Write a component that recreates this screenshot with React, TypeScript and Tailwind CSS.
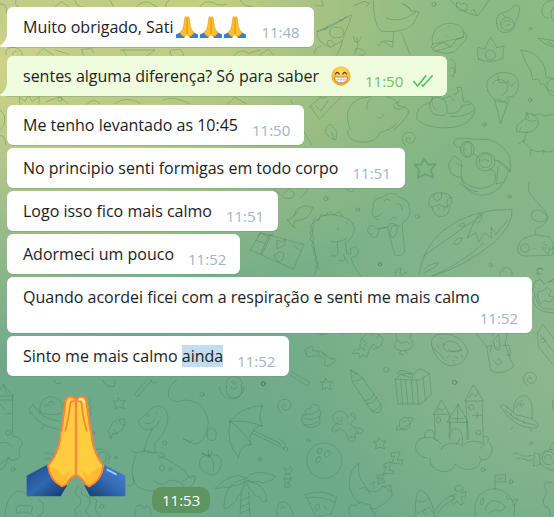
import type { ReactNode } from 'react';

type Message = {
  text: string;
  time: string;
  selected?: string;
  emoji?: 'hands' | 'grin';
  sent?: boolean;
  tail?: boolean;
};

const messages: Message[] = [
  { text: 'Muito obrigado, Sati', time: '11:48', emoji: 'hands', tail: true },
  { text: 'sentes alguma diferença? Só para saber', time: '11:50', emoji: 'grin', sent: true, tail: true },
  { text: 'Me tenho levantado as 10:45', time: '11:50' },
  { text: 'No principio senti formigas em todo corpo', time: '11:51' },
  { text: 'Logo isso fico mais calmo', time: '11:51' },
  { text: 'Adormeci um pouco', time: '11:52' },
  { text: 'Quando acordei ficei com a respiração e senti me mais calmo', time: '11:52' },
  { text: 'Sinto me mais calmo ', selected: 'ainda', time: '11:52' },
];

const FoldedHands = ({ className }: { className: string }) => (
  <svg viewBox="0 0 300 306" className={className} role="img" aria-label="Folded hands">
    <defs>
      <linearGradient id="sleeveLeft" x1="0" y1="0" x2="1" y2="1">
        <stop offset="0" stopColor="#1d4580" />
        <stop offset="0.5" stopColor="#3168b0" />
        <stop offset="1" stopColor="#123566" />
      </linearGradient>
      <linearGradient id="sleeveRight" x1="0" y1="1" x2="1" y2="0">
        <stop offset="0" stopColor="#143a70" />
        <stop offset="0.5" stopColor="#3269b2" />
        <stop offset="1" stopColor="#4a86d8" />
      </linearGradient>
    </defs>
    <path d="M2 242 66 208 Q80 250 124 270 L104 304 H2Z" fill="url(#sleeveLeft)" />
    <path d="M298 242 232 208 Q218 250 174 270 L192 304 H298Z" fill="url(#sleeveRight)" />
    <path
      d="M150 14 Q140 2 128 6 Q119 10 118 24 L107 105 Q102 112 103 130 L98 153 Q88 187 66 212 Q72 256 108 274 L124 266 Q128 250 150 240Z"
      fill="#ffcd3e" stroke="#f9853a" strokeWidth="6" strokeLinejoin="round"
    />
    <path
      d="M150 14 Q160 2 172 6 Q181 10 182 24 L193 105 Q198 112 197 130 L202 153 Q212 187 232 212 Q226 256 190 274 L176 266 Q172 250 150 240Z"
      fill="#ffcd3e" stroke="#f9853a" strokeWidth="6" strokeLinejoin="round"
    />
    <path d="M74 215 Q96 224 110 240 Q125 236 140 218 Q124 242 119 266 L108 272 Q78 258 74 215Z" fill="#ffb52f" opacity=".7" />
    <path d="M226 215 Q204 224 190 240 Q175 236 160 218 Q176 242 181 266 L190 272 Q222 258 226 215Z" fill="#ffb52f" opacity=".7" />
    <g fill="none" stroke="#f9853a" strokeLinecap="round" strokeWidth="5">
      <path d="M133 26 128 62 118 108M167 26 171 62 182 108M133 26Q134 17 145 18M167 26Q166 17 155 18" />
      <path d="M150 12V236" strokeWidth="7" />
    </g>
    <path d="M160 14Q171 9 174 22" fill="none" stroke="#fff1ba" strokeWidth="5" strokeLinecap="round" />
    <path d="M244 224 270 238" stroke="#a9d0ff" strokeWidth="5" strokeLinecap="round" />
  </svg>
);

const SmallHands = () => (
  <svg viewBox="0 0 24 24" className="size-6" role="img" aria-label="Folded hands">
    <path d="M1 19.500 6 17 10 21.500 9 23H1ZM23 19.500 18 17 14 21.500 15 23H23Z" fill="#3b7fc9" />
    <path
      d="M12 2.500C11 1 10 1.500 9.800 3L8.700 11Q8 15 5 17.500Q6.500 21 9.500 22L12 19.500L14.500 22Q17.500 21 19 17.500Q16 15 15.300 11L14.200 3C14 1.500 13 1 12 2.500Z"
      fill="#fdc12c" stroke="#eb9b25" strokeWidth=".6"
    />
    <path d="M12 3V19" stroke="#d98620" strokeWidth=".9" />
  </svg>
);

const Grin = () => (
  <svg viewBox="0 0 20 20" className="size-5" role="img" aria-label="Beaming face">
    <defs>
      <radialGradient id="face" cx=".5" cy=".3" r=".75">
        <stop offset="0" stopColor="#ffe065" />
        <stop offset="1" stopColor="#f5a029" />
      </radialGradient>
    </defs>
    <circle cx="10" cy="10" r="9.700" fill="url(#face)" />
    <path d="M4.500 8Q6.300 4.800 8.200 8M11.800 8Q13.700 4.800 15.500 8" fill="none" stroke="#5b3a12" strokeWidth="1.300" strokeLinecap="round" />
    <path d="M3.500 11H16.500Q16 17 10 17T3.500 11Z" fill="#fff" stroke="#96673a" strokeWidth=".7" />
    <path d="M4.500 13.700H15.500M7 11V16M10 11V17M13 11V16" stroke="#b9aca0" strokeWidth=".6" />
  </svg>
);

const ReadTicks = () => (
  <svg viewBox="0 0 22 14" className="h-3.5 w-5" fill="none" stroke="#5cc163" strokeWidth="2" role="img" aria-label="Read">
    <path d="M1 7.500 5 12.500 14 1.500M10 11.500 11 12.500 21 1.500" strokeLinecap="round" strokeLinejoin="round" />
  </svg>
);

// Line drawings of the chat wallpaper, at three units per pixel
const Doodles = ({ at, children }: { at: string; children: ReactNode }) => (
  <g transform={`translate(${at}) scale(.3333)`}>{children}</g>
);

const Star = ({ x, y, r = 1 }: { x: number; y: number; r?: number }) => (
  <path transform={`translate(${x} ${y}) scale(${r})`} d="M-3-17 5-6 18-7 10 4 14 17 0 11-13 17-11 3-19-6-7-6Z" />
);

const Swirl = ({ x, y }: { x: number; y: number }) => (
  <path transform={`translate(${x} ${y})`} d="M-8 20C-28 8-20-20 0-20 20-20 26 0 12 10 0 18-12 6-6-2-2-8 6-4 4 2" />
);

const Wallpaper = () => (
  <svg
    viewBox="0 0 554 517"
    preserveAspectRatio="xMinYMin slice"
    className="absolute inset-0 size-full"
    fill="none"
    stroke="#3c7a53"
    strokeOpacity=".35"
    strokeWidth="3"
    strokeLinecap="round"
    strokeLinejoin="round"
    aria-hidden="true"
  >
    <Doodles at="0 0">
      <path d="M0 12Q22 8 20 40M48 0Q42 18 58 20M165 20 185 5 208 22M225 0Q228 20 250 22M330 0 340 20M410 20Q420 5 445 6L470 20M510 0Q490 10 500 21M600 20Q610 0 640 8Q660 20 680 12M720 0Q730 20 760 20" />
      <path d="M18 165Q12 145 38 142Q62 142 68 165M38 165Q35 152 50 154M110 165 130 145 160 165M165 150 205 162M250 165 245 148 275 146 282 160M360 150H465L440 168M370 150 380 168M515 168Q500 144 525 150Q550 140 550 168M700 168Q720 142 745 160L780 150" />
      <path d="M60 315 58 292 75 304 86 285 96 304 118 290 116 315M140 305 180 290 205 312M260 314Q280 288 300 312M345 310Q380 285 420 310M490 300Q520 285 570 312M680 314 705 292 740 312" />
      <circle cx="180" cy="298" r="6" />
      <path d="M0 330Q15 340 14 360T0 390M0 405Q18 410 18 435" />
    </Doodles>
    <Doodles at="260 0">
      <path d="M185 0 190 18 167 17M282 17 312 4 328 10 316 21M340 0Q340 82 366 94Q432 100 460 72L478 36 455 32Q445 18 426 10M432 12Q448 22 455 35M378 54Q405 66 440 53L467 38M401 96 398 142 367 123 356 138M398 125 372 122M424 98 450 163" />
      <circle cx="522" cy="13" r="6" />
      <path d="M570 0Q608 40 652 48Q672 28 686 0M590 10C585 35 608 34 620 30 626 10 612 4 604 14 600 5 592 3 590 10ZM651 46 641 28M641 28 632 35" />
      <path d="M172 95 276 44 247 122 212 142Q165 125 172 95ZM174 94Q226 78 264 47M230 82A16 16 0 1 0 230 112A16 16 0 1 0 230 82M190 88Q202 92 203 80M212 142Q196 130 205 122Q216 118 222 134M237 58Q245 68 257 52M164 160Q160 144 184 138M247 122Q242 150 230 165" />
      <path d="M0 165 25 147 40 165M280 108 284 124Q298 132 304 110M291 112 294 137 283 164M285 148Q302 140 316 158Q312 170 296 164" />
      <path d="M518 132C508 88 548 62 585 72 616 80 612 104 610 112L518 132Q510 138 518 148Q552 168 584 155L616 122Q627 102 612 97M519 144Q550 120 560 133Q575 148 588 120L612 110M525 154 575 140" />
      <path d="M545 92h1M567 80h1M590 91h1M559 108h1M584 108h1M533 116h1" />
      <path d="M710 70Q706 42 732 38Q748 34 762 18Q780 10 779 31Q776 50 766 65Q766 94 738 98Q712 98 710 70ZM722 72A19 19 0 1 0 761 72A19 19 0 1 0 722 72M730 68Q738 56 753 65M728 44 736 53M735 77l15-4" />
      <circle cx="811" cy="86" r="4" />
      <path d="M882 0Q842 2 846 40Q848 52 866 54M882 20Q862 40 882 65M882 122 834 114Q850 132 882 142M882 136 864 126" />
      <path d="M656 178Q650 150 655 142L674 148Q685 120 691 112Q706 128 710 143L732 138 728 176Q690 192 656 178ZM676 165A15 15 0 1 0 706 165A15 15 0 1 0 676 165" />
      <path d="M784 150Q830 156 840 182L848 186Q857 205 858 232L882 236M784 150Q794 190 812 210L818 240 835 236 842 254 850 250Q862 275 882 275M882 288Q855 282 862 248Q870 234 882 236" />
      <path d="M572 178Q590 184 586 200L580 230 572 226M572 204Q590 198 586 219M683 272Q672 235 704 226Q712 214 752 220Q785 234 772 272Q766 292 741 292Q742 304 728 306 702 308 683 272M698 250A24 24 0 1 1 724 286M714 228Q710 250 728 248Q744 250 744 242 752 272 764 246M704 299 722 370 748 296M713 296 740 310" />
      <circle cx="810" cy="300" r="5" />
      <path d="M150 318 182 292M150 318 178 358 242 292M166 316 182 332 206 300M92 300 98 312M180 290Q190 300 200 290" />
      <path d="M270 390Q256 340 268 325Q285 292 325 292Q360 270 382 292Q410 294 416 318Q452 320 444 342Q428 370 400 390M322 330Q316 314 330 298M350 350Q362 362 372 344M402 312 420 304M400 320Q420 338 438 316" />
      <path d="M510 307Q460 322 472 360Q508 390 580 382Q632 376 646 330Q640 300 610 305L604 262 590 262 596 276 580 285M516 296Q500 320 520 342 548 350 552 346Q570 336 555 302Q538 286 516 296M518 290Q510 315 530 332M562 340Q600 344 606 316L630 314M570 350Q620 352 642 330M546 298 570 288 584 304" />
      <circle cx="673" cy="373" r="5" />
    </Doodles>
    <Doodles at="230 100">
      <path d="M220 92 246 135M286 90Q290 76 302 73Q326 98 320 105L317 120Q288 112 286 90ZM305 96 312 118" />
      <path d="M352 90Q352 122 388 126Q440 130 452 96 482 92 500 70" />
      <Swirl x={536} y={117} />
      <Star x={586} y={204} r={1.7} />
      <path d="M866 95Q855 104 862 75L886 56 890 38 912 46Q935 62 918 83 905 104 866 95M912 46Q928 36 944 48L972 42M890 38 896 54M904 38 912 47M887 76h2M868 90l6-7M866 131 888 120M892 96 880 126 904 148 900 166M904 148Q924 160 940 152L942 160M940 152Q960 162 972 150M888 56Q900 68 918 62" />
      <path d="M670 130Q676 110 700 115L742 118Q810 110 838 170L842 216 800 180M672 130Q678 144 692 143M692 148A20 24 0 1 0 732 148A20 24 0 1 0 692 148M702 148A12 15 0 1 0 724 148A12 15 0 1 0 702 148M738 185A28 27 0 1 0 795 185A28 27 0 1 0 738 185M748 182A19 17 0 1 0 785 182A19 17 0 1 0 748 182M730 160 745 172M794 180Q810 178 842 212M674 168Q650 185 658 208 665 230 692 232 708 284 755 286 800 284 824 244L836 210M696 198Q686 230 706 250 750 280 792 252 806 218 780 206M674 168 694 184 696 200 678 188M804 200 800 252 822 246M690 252Q720 275 745 275M755 182Q765 174 778 184" />
      <circle cx="838" cy="290" r="5" />
      <path d="M596 310Q598 275 632 278 668 280 666 308 650 332 630 314 612 318 606 322 596 322 596 310M606 322Q612 350 636 350 658 346 660 320M616 280Q602 296 622 302 640 298 634 278M664 292Q646 292 652 320M626 324v6M642 322v6" />
      <circle cx="288" cy="296" r="6" />
      <circle cx="384" cy="329" r="5" />
      <circle cx="562" cy="349" r="6" />
      <circle cx="450" cy="492" r="5" />
      <circle cx="782" cy="496" r="5" />
      <path d="M133 268 164 294Q188 302 194 280L176 264M160 280 175 268M212 292Q230 280 234 262M345 266 364 276 378 264" />
      <path d="M173 360 188 380 196 362Q240 362 248 322 214 310 198 334 192 352 173 360M188 380 198 384M205 336 190 350M227 325h1" />
      <path d="M442 358Q418 348 430 322 426 294 458 292 490 266 508 292 540 300 538 322 550 348 516 370L524 456Q512 472 494 464L472 382 446 388 442 408Q428 420 422 402 406 398 418 380 428 370 438 386L472 382Q474 370 488 370L510 380M456 340Q448 352 436 350M484 386A9 14 0 1 0 497 402 9 14 0 1 0 484 386M462 304Q470 292 480 302M500 312Q520 310 516 330M480 360 490 350 500 358" />
      <path d="M62 450 92 398 222 434 190 508 62 450ZM76 420 106 430 118 404M96 462 122 410M106 430 92 462M142 420 158 426 166 418 165 436 142 446ZM150 456 132 464 142 484Q160 488 162 462ZM82 410 92 398 112 410 130 402M210 450 190 438" />
      <path d="M252 528Q268 500 256 460 242 390 252 370 274 342 304 344 370 350 374 386 368 420 346 428L350 460 364 462 360 446 376 440 386 452 380 468 362 474Q370 500 392 528M304 424Q324 430 350 416M322 427 324 460Q316 474 304 466M326 480Q346 488 344 476M340 464 352 486M248 370 256 356 266 362 272 344 286 348 300 334 312 345 328 334 338 350M248 370Q236 380 248 390 234 398 246 406 234 420 250 426 240 440 254 448 246 462 258 470 250 484 264 490 260 504 270 510M324 384v5M350 366v4" />
      <path d="M566 528Q578 444 636 394 720 326 846 328 850 374 790 430 700 500 610 528M580 468 760 342M606 528Q680 500 760 430M688 376Q698 364 706 374 696 386 688 376M672 430Q674 414 696 414 694 430 680 434ZM748 342 730 370 712 414 738 398 746 426 764 398 784 414 784 382 798 404 832 362M750 340Q765 360 740 370M582 510Q594 492 626 488 620 502 582 518" />
      <path d="M900 244Q890 260 900 282L948 336Q960 368 926 366 894 356 908 334 930 320 954 350 950 378 920 384 912 392 916 404M890 412 914 404 956 410Q980 435 966 466L888 468Q860 470 864 440 872 414 890 412M872 444A13 13 0 1 0 898 444A13 13 0 1 0 872 444M908 446h1M916 446h1M938 440A6 6 0 1 0 948 440M946 424A6 6 0 1 0 952 434M946 454A6 6 0 1 0 956 450M958 440A6 6 0 1 0 968 440" />
      <path d="M496 528Q496 504 512 504L510 528M516 528Q522 512 532 520M810 528Q808 504 832 502 850 508 846 528M820 514h1M920 510Q922 504 936 506M918 524Q930 514 936 524" />
    </Doodles>
    <Doodles at="260 260">
      <path d="M882 58 852 72 842 58 826 64 818 92Q808 110 830 142 850 160 882 158M822 96Q826 130 850 146L882 148M832 108Q828 92 852 92L860 82 874 92 866 108 880 112 872 126 852 122 842 132ZM840 50Q830 44 832 28 846 18 850 32M866 66Q876 60 882 66" />
      <path d="M848 194 832 222 836 260 882 318M848 194 882 236M842 226 882 278M842 238Q850 228 858 242 852 250 846 248" />
      <path d="M138 282Q130 264 146 264 152 254 160 264L158 272Q190 270 210 296L224 296Q228 310 216 310 210 324 194 316 192 304 198 300 180 284 156 288 142 296 138 282M172 274 178 284M190 280 196 290" />
      <path d="M278 280Q282 266 300 268 296 236 322 220 364 218 370 240 364 264 350 262L340 252 330 264 320 292 308 284 300 294 296 280ZM308 238 320 250 312 262M334 220 340 230M356 226 350 236M302 262 316 270M338 262Q344 276 354 262" />
      <path d="M406 220 412 240Q396 256 410 268 434 280 456 262 464 244 450 236L454 220M412 240 422 250 442 244 450 252M422 274 418 282 430 284M436 272 440 282" />
      <path d="M514 254Q510 222 552 222 608 224 624 274 616 316 570 318 524 304 514 254M552 256Q552 240 574 244 600 248 604 272 586 280 566 270M550 250Q546 278 578 274L604 270M516 262Q540 278 556 302M540 234l8 4M532 254l4 8M586 290l8 4M560 292l6-4M604 286l3 6M578 304l6-2" />
      <path d="M648 220 680 260 692 330 Q720 350 762 320 L750 296 736 252 742 220M680 260 696 256 690 276M700 240 716 224 720 260 706 264ZM712 244h2M726 256 748 256 752 286 738 284M700 300Q716 326 726 306 722 294 712 296M706 264Q714 276 722 264M694 218 700 228" />
      <circle cx="379" cy="329" r="8" />
      <circle cx="11" cy="371" r="6" />
      <circle cx="583" cy="367" r="6" />
      <Swirl x={810} y={357} />
      <path d="M92 334 146 364Q152 376 138 376L90 344M170 216Q184 230 202 220M240 218 250 226" />
      <circle cx="360" cy="13" r="5" />
    </Doodles>
    <Doodles at="0 380">
      <path d="M0 30 10 14 40 48H0M10 14 20 40M38 48V168Q70 174 66 196 52 204 60 230 36 252 26 232 12 272 0 270M0 60H38M0 74Q12 78 12 90M20 102 32 100M24 150A8 8 0 1 0 26 166 8 8 0 1 0 24 150M0 190Q20 180 36 200M0 250Q16 248 24 232" />
      <circle cx="39" cy="268" r="6" />
      <path d="M120 100Q114 60 148 50 190 50 190 90M98 75Q80 86 92 96 116 140 184 150M98 75 124 98Q154 108 184 100M110 92Q130 116 180 124M92 98 88 104M130 136 126 148M146 68Q162 58 160 72M132 82Q140 68 152 78" />
      <path d="M162 0Q168 18 184 8M308 0Q314 22 342 20L346 0M404 42 440 0M414 48 456 0M404 42Q406 52 416 48M452 0Q458 16 474 4" />
      <Star x={358} y={69} />
      <path d="M324 152 332 142Q332 120 374 116 382 140 350 162L338 160 332 176 328 162ZM350 128h1M342 148 350 160M360 118Q352 128 374 138" />
      <path d="M416 128Q412 118 438 104 452 80 474 78 504 80 504 116 500 160 464 188L466 216M416 128Q424 148 444 150 474 142 476 124M434 128Q450 138 464 120M446 106v4M470 98v4M458 146Q436 184 432 216M394 210Q400 224 428 214L490 220Q502 232 476 234M408 226Q382 280 412 320 440 340 510 330L550 330Q586 320 584 296 592 284 568 292 548 258 476 226M478 264A8 8 0 1 0 494 264 8 8 0 1 0 478 264M506 268A5 5 0 1 0 516 268 5 5 0 1 0 506 268M462 302Q488 324 508 300 548 304 552 320M568 292 548 304M430 208 460 222" />
      <circle cx="494" cy="189" r="6" />
      <circle cx="606" cy="43" r="6" />
      <circle cx="789" cy="11" r="6" />
      <circle cx="348" cy="233" r="4" />
      <circle cx="779" cy="239" r="5" />
      <path d="M530 0Q500 20 506 50 520 74 552 60 602 60 616 98 632 120 618 160 606 194 582 192 560 180 550 176M622 164A14 13 0 1 0 648 164A14 13 0 1 0 622 164M550 176 568 186 576 182" />
      <path d="M658 20A36 36 0 1 0 732 20M680 20A24 24 0 1 0 724 20 24 22 0 1 0 680 20M694 20A8 8 0 1 0 710 20M696 6Q704-2 710 8 702 18 696 6" />
      <path d="M690 124Q730 76 788 78 772 108 788 138 768 134 758 156 744 170 754 194 722 190 716 232 676 190 690 124ZM690 124Q740 120 788 138M690 124Q730 150 754 194M756 160 840 200M760 152 840 190M788 78 784 72M716 232 712 236" />
      <path d="M598 248Q600 226 626 226 664 218 664 250 662 284 632 284 600 278 598 248M626 226Q646 240 640 272M626 226 604 220 630 232M624 210 628 232 636 216" />
      <path d="M738 294Q700 270 646 324 664 328 670 318 680 330 700 316 712 320 736 304M736 296Q670 310 672 386 690 384 694 374 710 368 712 350 728 340 736 300M738 296Q760 262 826 288 812 310 802 302 788 314 776 304 760 310 740 300M744 304Q800 310 800 364 784 370 778 350 760 348 758 334 742 326 740 304M724 340 720 411M746 338 750 411M722 362 746 352M722 380 748 370M724 398 750 388" />
      <path d="M266 52Q278 60 266 70 280 82 268 90 278 102 268 110L256 116M132 222Q146 214 152 224L166 220M134 238 148 234 156 244M284 208Q324 200 328 230 328 262 302 262M296 232A12 12 0 1 0 318 232 12 12 0 1 0 296 232M326 236 332 228M274 156h10v8h-10" />
      <path d="M16 411Q12 360 50 334 80 330 94 360M60 376Q44 380 50 400L72 396 92 402 98 380ZM116 358 130 370 128 400 110 411M234 320Q216 340 240 354 250 372 224 388L230 411M246 324 244 342 268 352Q276 372 256 390L270 411M270 330 274 350 290 360 286 388 300 411M380 318Q410 320 400 290M406 411Q400 370 424 376 434 394 440 376 458 384 450 411" />
      <circle cx="306" cy="379" r="6" />
    </Doodles>
    <Doodles at="250 370">
      <circle cx="40" cy="41" r="6" />
      <Star x={230} y={42} />
      <Star x={390} y={220} />
      <Swirl x={103} y={108} />
      <circle cx="614" cy="37" r="7" />
      <circle cx="175" cy="211" r="5" />
      <circle cx="700" cy="299" r="6" />
      <circle cx="844" cy="220" r="4" />
      <circle cx="783" cy="335" r="6" />
      <path d="M84 216 106 242Q116 248 112 234 102 228 100 236M88 206 110 228" />
      <path d="M302 0 306 34 366 124Q390 138 396 108L338 24 302 0M306 34Q324 36 338 24M302 0 322 10 314 14M342 92Q370 90 372 68M350 102Q374 100 380 82M366 124Q386 120 392 104" />
      <path d="M436 28 444 102 512 102 544 74 538 10 510 30 436 28ZM436 28 452 12 486 10M452 28 458 102M466 30 474 102M484 30 490 102M500 30 506 102M520 22 526 88M486 14Q450-10 442 10L486 24Q500-10 520 0L536 10" />
      <path d="M156 152Q150 138 166 134 162 114 180 116 188 94 198 106 208 106 206 120 220 122 208 140L210 160Q198 174 178 172 158 168 156 152M160 144Q180 156 212 138M166 132Q184 138 206 122M162 164Q180 170 206 154" />
      <path d="M278 162A22 20 0 1 1 292 144L308 128Q320 132 314 148L302 160 310 172 334 176Q346 184 332 190L314 190 316 208Q308 222 298 212L288 188 268 174 256 186Q242 188 248 170L262 160M262 144v3M276 142v3M262 154Q270 160 278 150M292 162h1M302 178h1M316 178l8 10M300 202 316 200M250 174l10 8M302 132l12 12" />
      <path d="M448 160Q450 142 468 142 484 150 480 172 458 188 448 170ZM442 168Q434 184 448 180 480 168 490 148 486 138 474 144M458 156 468 152" />
      <path d="M550 132 574 90 598 132ZM592 156 624 102 654 156ZM646 92 670 44 700 92ZM552 132 556 198M598 132V206M652 156 656 208M648 92 652 208M696 92 700 216M602 156V180M600 208Q596 176 620 176 640 180 638 222M560 128 566 114 576 122 586 112M624 104 622 154M606 146H640M658 84 666 70 676 80 684 68M558 150A6 8 0 1 0 572 150 6 8 0 1 0 558 150M656 112A8 8 0 1 0 672 112 8 8 0 1 0 656 112M678 188A7 7 0 1 0 692 188 7 7 0 1 0 678 188M668 136H694M682 126V142M620 222 630 206" />
      <path d="M530 264Q498 260 496 228 504 202 524 204 522 178 540 180 556 184 552 204L574 220M524 204Q546 198 560 212M574 238Q590 212 630 222L638 228Q660 202 704 222L690 236M704 200Q718 194 714 214 736 232 720 258 714 272 694 268 684 302 650 298 626 296 616 282 604 310 574 304 540 298 540 266M574 238 580 228M694 268 688 258" />
      <path d="M752 110Q754 98 768 108L798 134 846 146 862 158Q872 176 844 174 790 172 752 110M790 124Q790 78 828 76 852 92 846 146M798 114Q800 96 820 90M812 98A5 5 0 1 0 820 98M764 118Q790 154 858 166M768 108 774 116M788 170 784 178M840 176 846 184M782 130l4 8M798 142l4 8M820 152l4 8M808 106 816 112" />
      <path d="M170 272A53 53 0 1 0 276 272A53 53 0 1 0 170 272M202 246Q200 234 214 234 220 244 206 250ZM224 258Q220 246 236 240 246 252 230 262ZM198 274Q196 262 210 260 216 270 204 278Z" />
      <path d="M104 294 112 302 122 290 126 302 118 312 124 326 116 338 120 350 104 354 106 338 102 328 108 312ZM108 312 118 312M104 326 124 326M106 338 116 338" />
      <path d="M326 280Q296 298 298 346 306 390 332 400M326 280Q322 324 344 344L356 362Q388 372 396 350L406 352Q414 366 426 364 432 388 386 410 370 424 358 412M328 356 344 352 354 362 360 372M360 344 374 336 370 354M396 350 422 346 424 364M306 441Q290 430 300 406L320 406Q330 390 346 402 368 400 364 420 380 430 376 441" />
      <path d="M382 318V326L392 322 382 342 406 336 400 328 394 332 402 314ZM402 284V292L410 290 400 310 432 312 432 302 418 302 422 276ZM424 250V260L434 258 426 280 458 282 458 270 442 270 450 246Z" />
      <path d="M166 374Q210 354 260 382L244 432 198 441 166 374ZM168 384Q216 374 254 398M196 414Q194 402 206 402 214 416 200 422ZM224 408 230 420M82 441Q74 398 102 394 122 402 132 441M92 416Q98 404 104 414" />
      <path d="M498 441Q492 372 510 360 540 364 556 441M500 390Q516 404 534 386M502 430 538 412 550 430M524 420Q514 424 524 434M556 420Q580 380 616 374M564 430Q580 400 616 386M614 362A13 13 0 1 1 634 370L648 366 646 378 632 382 640 402 630 404 622 392 610 404 606 394 614 380 602 378M616 356A8 8 0 1 0 634 356" />
      <path d="M676 441Q668 400 690 374 724 346 758 362 784 376 794 410L792 441M736 358 734 316 766 314 766 336 736 336M744 326H756M692 400Q688 386 702 386 704 398 694 404ZM708 420Q706 402 730 392 760 394 764 412 756 430 738 420 722 424 714 432M770 378Q768 390 780 388M786 392 804 388 792 408" />
      <path d="M790 252Q802 246 812 254T846 256M800 266Q814 260 824 268T846 270M854 248 868 252 870 284 852 288ZM870 256Q886 236 912 238M870 278Q886 300 912 300M876 264A20 20 0 1 1 900 284 20 20 0 0 1 876 264M884 264A10 10 0 1 1 904 264M904 240 900 230 912 216M908 90V120M912 340Q886 330 882 346 894 360 888 374 872 396 886 410 904 410 900 441" />
    </Doodles>
  </svg>
);

const Bubble = ({ message }: { message: Message }) => (
  <div
    className={`relative flex w-fit max-w-full flex-wrap items-end rounded-[6px] py-2 pr-3.5 pl-4 shadow-[0_1px_0_#6b9a7466] ${
      message.sent ? 'bg-[#effdde]' : 'bg-white'
    } ${message.tail ? 'mb-1.5 rounded-bl-none' : ''}`}
  >
    {message.tail && (
      <svg viewBox="0 0 7 12" className={`absolute bottom-0 -left-[7px] h-3 w-[7px] ${message.sent ? 'fill-[#effdde]' : 'fill-white'}`} aria-hidden="true">
        <path d="M7 0Q6 7 0 10.500Q0 12 2 12H7Z" />
      </svg>
    )}
    <p className="flex items-center text-base leading-6">
      <span className="whitespace-pre-wrap">
        {message.text}
        {message.selected && <mark className="bg-[#c2dcf2] text-inherit">{message.selected}</mark>}
      </span>
      {message.emoji === 'hands' && (
        <span className="ml-0.5 flex">
          <SmallHands />
          <SmallHands />
          <SmallHands />
        </span>
      )}
      {message.emoji === 'grin' && <span className="ml-3"><Grin /></span>}
    </p>
    <span
      className={`-mb-0.5 ml-auto flex items-center gap-2.5 pl-3.5 text-[15px] leading-[18px] ${
        message.sent ? 'text-[#6cc264]' : 'text-[#a5b3c2]'
      }`}
    >
      <time>{message.time}</time>
      {message.sent && <ReadTicks />}
    </span>
  </div>
);

const App = () => {
  return (
    <main className="relative min-h-screen overflow-hidden bg-[radial-gradient(circle_at_0%_12%,#cfd388_0%,#cfd38800_42%),radial-gradient(circle_at_36%_0%,#c1cd80_0%,#c1cd8000_46%),radial-gradient(circle_at_100%_70%,#8eb78e_0%,#8eb78e00_38%),radial-gradient(circle_at_100%_0%,#8dbc84_0%,#8dbc8400_70%),linear-gradient(#6ea98a,#6ea98a)] font-['Open_Sans','Noto_Sans',sans-serif] text-[#1a1d21]">
      <Wallpaper />
      <div className="relative flex flex-col gap-[3px] pt-[7px] pr-[22px] pl-[7px]">
        {messages.map((message, index) => (
          <Bubble key={index} message={message} />
        ))}
        <div className="mt-4 ml-[19px] flex items-end gap-[26px]">
          <FoldedHands className="mb-4 h-[102px] w-[100px]" />
          <time className="rounded-[10px] bg-[#5e9460] px-2.5 text-[15px] leading-[26px] text-white">11:53</time>
        </div>
      </div>
    </main>
  );
};

export default App;
